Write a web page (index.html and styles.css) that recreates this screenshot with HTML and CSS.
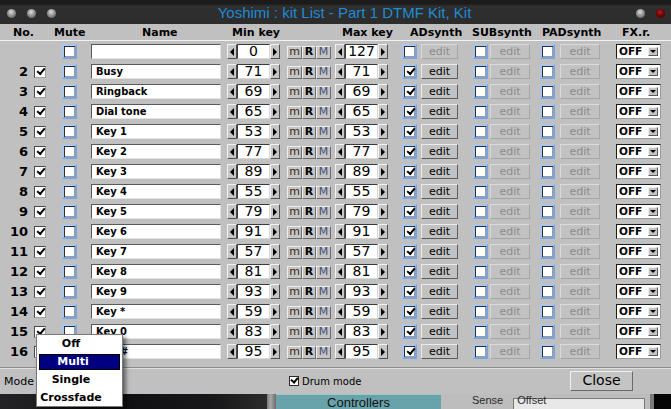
FILE: index.html
```html
<!DOCTYPE html>
<html>
<head>
<meta charset="utf-8">
<link rel="stylesheet" href="styles.css">
</head>
<body>
<div class="titlebar">
  <span class="ball"></span><span class="ball"></span><span class="ball"></span>
  <span class="title">Yoshimi : kit List - Part 1 DTMF Kit, Kit</span>
  <span class="ball"></span><span class="ball red"></span>
</div>
<div class="window">
  <div class="header">
    <span class="h h-no">No.</span>
    <span class="h h-mute">Mute</span>
    <span class="h h-name">Name</span>
    <span class="h h-min">Min key</span>
    <span class="h h-max">Max key</span>
    <span class="h h-ad">ADsynth</span>
    <span class="h h-sub">SUBsynth</span>
    <span class="h h-pad">PADsynth</span>
    <span class="h">FX.r.</span>
  </div>
  <div class="rows">
    <div class="row">
      <span class="num"></span><span class="en none"></span><span class="chk mute"></span>
      <span class="name"></span>
      <span class="spin"><span class="arr l"></span><span class="val">0</span><span class="arr r"></span></span>
      <span class="mrm"><span class="b bm">m</span><span class="b br">R</span><span class="b bM">M</span></span>
      <span class="spin max"><span class="arr l"></span><span class="val">127</span><span class="arr r"></span></span>
      <span class="chk ad"></span><span class="edit e-ad off">edit</span>
      <span class="chk sub"></span><span class="edit e-sub off">edit</span>
      <span class="chk pad"></span><span class="edit e-pad off">edit</span>
      <span class="fx">OFF<span class="dd"></span></span>
    </div>
    <div class="row">
      <span class="num">2</span><span class="en on"></span><span class="chk mute"></span>
      <span class="name">Busy</span>
      <span class="spin"><span class="arr l"></span><span class="val">71</span><span class="arr r"></span></span>
      <span class="mrm"><span class="b bm">m</span><span class="b br">R</span><span class="b bM">M</span></span>
      <span class="spin max"><span class="arr l"></span><span class="val">71</span><span class="arr r"></span></span>
      <span class="chk ad on"></span><span class="edit e-ad">edit</span>
      <span class="chk sub"></span><span class="edit e-sub off">edit</span>
      <span class="chk pad"></span><span class="edit e-pad off">edit</span>
      <span class="fx">OFF<span class="dd"></span></span>
    </div>
    <div class="row">
      <span class="num">3</span><span class="en on"></span><span class="chk mute"></span>
      <span class="name">Ringback</span>
      <span class="spin"><span class="arr l"></span><span class="val">69</span><span class="arr r"></span></span>
      <span class="mrm"><span class="b bm">m</span><span class="b br">R</span><span class="b bM">M</span></span>
      <span class="spin max"><span class="arr l"></span><span class="val">69</span><span class="arr r"></span></span>
      <span class="chk ad on"></span><span class="edit e-ad">edit</span>
      <span class="chk sub"></span><span class="edit e-sub off">edit</span>
      <span class="chk pad"></span><span class="edit e-pad off">edit</span>
      <span class="fx">OFF<span class="dd"></span></span>
    </div>
    <div class="row">
      <span class="num">4</span><span class="en on"></span><span class="chk mute"></span>
      <span class="name">Dial tone</span>
      <span class="spin"><span class="arr l"></span><span class="val">65</span><span class="arr r"></span></span>
      <span class="mrm"><span class="b bm">m</span><span class="b br">R</span><span class="b bM">M</span></span>
      <span class="spin max"><span class="arr l"></span><span class="val">65</span><span class="arr r"></span></span>
      <span class="chk ad on"></span><span class="edit e-ad">edit</span>
      <span class="chk sub"></span><span class="edit e-sub off">edit</span>
      <span class="chk pad"></span><span class="edit e-pad off">edit</span>
      <span class="fx">OFF<span class="dd"></span></span>
    </div>
    <div class="row">
      <span class="num">5</span><span class="en on"></span><span class="chk mute"></span>
      <span class="name">Key 1</span>
      <span class="spin"><span class="arr l"></span><span class="val">53</span><span class="arr r"></span></span>
      <span class="mrm"><span class="b bm">m</span><span class="b br">R</span><span class="b bM">M</span></span>
      <span class="spin max"><span class="arr l"></span><span class="val">53</span><span class="arr r"></span></span>
      <span class="chk ad on"></span><span class="edit e-ad">edit</span>
      <span class="chk sub"></span><span class="edit e-sub off">edit</span>
      <span class="chk pad"></span><span class="edit e-pad off">edit</span>
      <span class="fx">OFF<span class="dd"></span></span>
    </div>
    <div class="row">
      <span class="num">6</span><span class="en on"></span><span class="chk mute"></span>
      <span class="name">Key 2</span>
      <span class="spin"><span class="arr l"></span><span class="val">77</span><span class="arr r"></span></span>
      <span class="mrm"><span class="b bm">m</span><span class="b br">R</span><span class="b bM">M</span></span>
      <span class="spin max"><span class="arr l"></span><span class="val">77</span><span class="arr r"></span></span>
      <span class="chk ad on"></span><span class="edit e-ad">edit</span>
      <span class="chk sub"></span><span class="edit e-sub off">edit</span>
      <span class="chk pad"></span><span class="edit e-pad off">edit</span>
      <span class="fx">OFF<span class="dd"></span></span>
    </div>
    <div class="row">
      <span class="num">7</span><span class="en on"></span><span class="chk mute"></span>
      <span class="name">Key 3</span>
      <span class="spin"><span class="arr l"></span><span class="val">89</span><span class="arr r"></span></span>
      <span class="mrm"><span class="b bm">m</span><span class="b br">R</span><span class="b bM">M</span></span>
      <span class="spin max"><span class="arr l"></span><span class="val">89</span><span class="arr r"></span></span>
      <span class="chk ad on"></span><span class="edit e-ad">edit</span>
      <span class="chk sub"></span><span class="edit e-sub off">edit</span>
      <span class="chk pad"></span><span class="edit e-pad off">edit</span>
      <span class="fx">OFF<span class="dd"></span></span>
    </div>
    <div class="row">
      <span class="num">8</span><span class="en on"></span><span class="chk mute"></span>
      <span class="name">Key 4</span>
      <span class="spin"><span class="arr l"></span><span class="val">55</span><span class="arr r"></span></span>
      <span class="mrm"><span class="b bm">m</span><span class="b br">R</span><span class="b bM">M</span></span>
      <span class="spin max"><span class="arr l"></span><span class="val">55</span><span class="arr r"></span></span>
      <span class="chk ad on"></span><span class="edit e-ad">edit</span>
      <span class="chk sub"></span><span class="edit e-sub off">edit</span>
      <span class="chk pad"></span><span class="edit e-pad off">edit</span>
      <span class="fx">OFF<span class="dd"></span></span>
    </div>
    <div class="row">
      <span class="num">9</span><span class="en on"></span><span class="chk mute"></span>
      <span class="name">Key 5</span>
      <span class="spin"><span class="arr l"></span><span class="val">79</span><span class="arr r"></span></span>
      <span class="mrm"><span class="b bm">m</span><span class="b br">R</span><span class="b bM">M</span></span>
      <span class="spin max"><span class="arr l"></span><span class="val">79</span><span class="arr r"></span></span>
      <span class="chk ad on"></span><span class="edit e-ad">edit</span>
      <span class="chk sub"></span><span class="edit e-sub off">edit</span>
      <span class="chk pad"></span><span class="edit e-pad off">edit</span>
      <span class="fx">OFF<span class="dd"></span></span>
    </div>
    <div class="row">
      <span class="num">10</span><span class="en on"></span><span class="chk mute"></span>
      <span class="name">Key 6</span>
      <span class="spin"><span class="arr l"></span><span class="val">91</span><span class="arr r"></span></span>
      <span class="mrm"><span class="b bm">m</span><span class="b br">R</span><span class="b bM">M</span></span>
      <span class="spin max"><span class="arr l"></span><span class="val">91</span><span class="arr r"></span></span>
      <span class="chk ad on"></span><span class="edit e-ad">edit</span>
      <span class="chk sub"></span><span class="edit e-sub off">edit</span>
      <span class="chk pad"></span><span class="edit e-pad off">edit</span>
      <span class="fx">OFF<span class="dd"></span></span>
    </div>
    <div class="row">
      <span class="num">11</span><span class="en on"></span><span class="chk mute"></span>
      <span class="name">Key 7</span>
      <span class="spin"><span class="arr l"></span><span class="val">57</span><span class="arr r"></span></span>
      <span class="mrm"><span class="b bm">m</span><span class="b br">R</span><span class="b bM">M</span></span>
      <span class="spin max"><span class="arr l"></span><span class="val">57</span><span class="arr r"></span></span>
      <span class="chk ad on"></span><span class="edit e-ad">edit</span>
      <span class="chk sub"></span><span class="edit e-sub off">edit</span>
      <span class="chk pad"></span><span class="edit e-pad off">edit</span>
      <span class="fx">OFF<span class="dd"></span></span>
    </div>
    <div class="row">
      <span class="num">12</span><span class="en on"></span><span class="chk mute"></span>
      <span class="name">Key 8</span>
      <span class="spin"><span class="arr l"></span><span class="val">81</span><span class="arr r"></span></span>
      <span class="mrm"><span class="b bm">m</span><span class="b br">R</span><span class="b bM">M</span></span>
      <span class="spin max"><span class="arr l"></span><span class="val">81</span><span class="arr r"></span></span>
      <span class="chk ad on"></span><span class="edit e-ad">edit</span>
      <span class="chk sub"></span><span class="edit e-sub off">edit</span>
      <span class="chk pad"></span><span class="edit e-pad off">edit</span>
      <span class="fx">OFF<span class="dd"></span></span>
    </div>
    <div class="row">
      <span class="num">13</span><span class="en on"></span><span class="chk mute"></span>
      <span class="name">Key 9</span>
      <span class="spin"><span class="arr l"></span><span class="val">93</span><span class="arr r"></span></span>
      <span class="mrm"><span class="b bm">m</span><span class="b br">R</span><span class="b bM">M</span></span>
      <span class="spin max"><span class="arr l"></span><span class="val">93</span><span class="arr r"></span></span>
      <span class="chk ad on"></span><span class="edit e-ad">edit</span>
      <span class="chk sub"></span><span class="edit e-sub off">edit</span>
      <span class="chk pad"></span><span class="edit e-pad off">edit</span>
      <span class="fx">OFF<span class="dd"></span></span>
    </div>
    <div class="row">
      <span class="num">14</span><span class="en on"></span><span class="chk mute"></span>
      <span class="name">Key *</span>
      <span class="spin"><span class="arr l"></span><span class="val">59</span><span class="arr r"></span></span>
      <span class="mrm"><span class="b bm">m</span><span class="b br">R</span><span class="b bM">M</span></span>
      <span class="spin max"><span class="arr l"></span><span class="val">59</span><span class="arr r"></span></span>
      <span class="chk ad on"></span><span class="edit e-ad">edit</span>
      <span class="chk sub"></span><span class="edit e-sub off">edit</span>
      <span class="chk pad"></span><span class="edit e-pad off">edit</span>
      <span class="fx">OFF<span class="dd"></span></span>
    </div>
    <div class="row">
      <span class="num">15</span><span class="en on"></span><span class="chk mute"></span>
      <span class="name">Key 0</span>
      <span class="spin"><span class="arr l"></span><span class="val">83</span><span class="arr r"></span></span>
      <span class="mrm"><span class="b bm">m</span><span class="b br">R</span><span class="b bM">M</span></span>
      <span class="spin max"><span class="arr l"></span><span class="val">83</span><span class="arr r"></span></span>
      <span class="chk ad on"></span><span class="edit e-ad">edit</span>
      <span class="chk sub"></span><span class="edit e-sub off">edit</span>
      <span class="chk pad"></span><span class="edit e-pad off">edit</span>
      <span class="fx">OFF<span class="dd"></span></span>
    </div>
    <div class="row">
      <span class="num">16</span><span class="en"></span><span class="chk mute"></span>
      <span class="name">Key #</span>
      <span class="spin"><span class="arr l"></span><span class="val">95</span><span class="arr r"></span></span>
      <span class="mrm"><span class="b bm">m</span><span class="b br">R</span><span class="b bM">M</span></span>
      <span class="spin max"><span class="arr l"></span><span class="val">95</span><span class="arr r"></span></span>
      <span class="chk ad on"></span><span class="edit e-ad">edit</span>
      <span class="chk sub"></span><span class="edit e-sub off">edit</span>
      <span class="chk pad"></span><span class="edit e-pad off">edit</span>
      <span class="fx">OFF<span class="dd"></span></span>
    </div>
  </div>
  <div class="footer">
    <span class="mode">Mode</span>
    <span class="drumbox on"></span><span class="drum">Drum mode</span>
    <span class="close">Close</span>
  </div>
  <div class="menu">
    <div class="mi">Off</div>
    <div class="mi sel">Multi</div>
    <div class="mi">Single</div>
    <div class="mi">Crossfade</div>
  </div>
</div>
<div class="desk">
  <span class="dk-left"></span>
  <span class="dk-bar"></span>
  <span class="dk-btn">Controllers</span>
  <span class="dk-panel"><span class="dk-label">Sense</span><span class="dk-label">Offset</span><span class="dk-box"></span></span>
  <span class="dk-edge"></span>
  <span class="dk-black"></span>
</div>
</body>
</html>
```
FILE: styles.css
```css
* { box-sizing: border-box; }
body {
  margin: 0;
  width: 671px;
  height: 409px;
  overflow: hidden;
  background: #111;
  font-family: "DejaVu Sans", sans-serif;
  color: #000;
}

/* title bar */
.titlebar {
  height: 24px;
  display: flex;
  align-items: center;
  padding: 2px 6px 0 7px;
  background: linear-gradient(#1a1a1a 0, #1c1c1c 4px, #2f2f2f 6px, #2c2c2c 100%);
}
.ball {
  width: 9px;
  height: 9px;
  border-radius: 50%;
  margin-right: 11px;
  background: radial-gradient(circle at 45% 35%, #e0e0e0 0, #9a9a9a 40%, #4e4e4e 100%);
}
.ball:last-child { margin-right: 0; }
.ball.red { background: radial-gradient(circle at 45% 35%, #b02020 0, #700000 50%, #3a0000 100%); }
.title {
  flex: 1;
  text-align: center;
  padding-right: 14px;
  font-family: "Liberation Sans", sans-serif;
  font-size: 15px;
  color: #1f8bd4;
  line-height: 20px;
}

/* window */
.window {
  position: relative;
  height: 370px;
  background: #c0c0c0;
}
.header {
  height: 16px;
  display: flex;
  align-items: center;
  padding-left: 13px;
  font-weight: bold;
  font-size: 11px;
}
.h { display: block; white-space: nowrap; }
.h-no { width: 41px; }
.h-mute { width: 88px; }
.h-name { width: 90px; }
.h-min { width: 110px; }
.h-max { width: 68px; }
.h-ad { width: 62px; }
.h-sub { width: 70px; }
.h-pad { width: 80px; }

.rows { border-top: 1px solid #f2f2f2; }
.row {
  height: 20px;
  display: flex;
  align-items: flex-start;
  padding-top: 3px;
}
.row > span { flex: none; }
.num {
  width: 29px;
  padding-right: 1px;
  text-align: right;
  font-weight: bold;
  font-size: 13px;
  line-height: 15px;
}
.en {
  position: relative;
  margin-left: 5px;
  margin-top: 2px;
  width: 12px;
  height: 12px;
  background: #fff;
  border: 1px solid;
  border-color: #4a4a4a #a0a0a0 #a0a0a0 #4a4a4a;
}
.en.none { visibility: hidden; }
.en.on::after, .chk.on::after, .drumbox.on::after {
  content: "";
  position: absolute;
  left: 2px;
  top: 1px;
  width: 6px;
  height: 3px;
  border-left: 2px solid #000;
  border-bottom: 2px solid #000;
  transform: rotate(-50deg);
}
.chk {
  position: relative;
  width: 15px;
  height: 15px;
  background: #fff;
  border: 2px solid;
  border-color: #a8c8f2 #7aa4e0 #7aa4e0 #a8c8f2;
  box-shadow: inset 1px 1px #2e2e2e, inset -1px -1px #9c9c9c;
}
.chk.on::after { left: 3px; top: 2px; width: 6px; height: 3px; }
.mute { margin-left: 16px; }
.name {
  margin-left: 14px;
  width: 130px;
  height: 15px;
  background: #fff;
  border: 1px solid;
  border-color: #5a5a5a #e4e4e4 #e4e4e4 #5a5a5a;
  padding-left: 4px;
  font-family: "DejaVu Sans Condensed", "DejaVu Sans", sans-serif;
  font-weight: bold;
  font-size: 11px;
  line-height: 13px;
  white-space: nowrap;
}
.spin {
  display: flex;
  margin-left: 6px;
  height: 15px;
}
.spin.max { margin-left: 4px; }
.arr {
  width: 10px;
  height: 15px;
  display: flex;
  align-items: center;
  justify-content: center;
  background: #c6c6c6;
  border: 1px solid;
  border-color: #f2f2f2 #505050 #505050 #f2f2f2;
}
.arr::before {
  content: "";
  width: 0;
  height: 0;
  border-top: 4px solid transparent;
  border-bottom: 4px solid transparent;
}
.arr.l::before { border-right: 4px solid #000; }
.arr.r::before { border-left: 4px solid #000; }
.val {
  width: 33px;
  height: 15px;
  background: #fff;
  border: 1px solid;
  border-color: #3a3a3a #d8d8d8 #d8d8d8 #3a3a3a;
  text-align: center;
  font-size: 14px;
  line-height: 12px;
}
.mrm {
  display: flex;
  margin-left: 7px;
  margin-top: 2px;
  height: 13px;
}
.b {
  width: 15px;
  height: 13px;
  background: #c4c4c4;
  border: 1px solid;
  border-color: #eeeeee #6c6c6c #6c6c6c #eeeeee;
  text-align: center;
  font-size: 11px;
  line-height: 10px;
}
.b.br { width: 14px; font-weight: bold; }
.bm { color: #3e2c14; }
.bM { color: #4a4e74; }
.ad { margin-left: 14px; }
.sub { margin-left: 15px; }
.pad { margin-left: 10px; }
.edit {
  height: 15px;
  background: #c2c2c2;
  border: 1px solid;
  border-color: #ececec #5c5c5c #5c5c5c #ececec;
  text-align: center;
  font-size: 11px;
  line-height: 13px;
}
.edit.off {
  color: #8c8c8c;
  border-color: #dadada #a6a6a6 #a6a6a6 #dadada;
}
.e-ad { margin-left: 4px; width: 37px; }
.e-sub { margin-left: 2px; width: 40px; }
.e-pad { margin-left: 5px; width: 40px; }
.fx {
  position: relative;
  display: flex;
  align-items: center;
  justify-content: space-between;
  margin-left: 16px;
  width: 45px;
  height: 15px;
  background: #fff;
  border: 1px solid;
  border-color: #1a1a1a #9a9a9a #9a9a9a #1a1a1a;
  padding: 0 2px 0 2px;
  font-weight: bold;
  font-size: 10.5px;
  line-height: 13px;
}
.dd {
  width: 10px;
  height: 9px;
  display: flex;
  align-items: center;
  justify-content: center;
  background: #c4c4c4;
  border: 1px solid;
  border-color: #eeeeee #5a5a5a #5a5a5a #eeeeee;
}
.dd::before {
  content: "";
  border-left: 3px solid transparent;
  border-right: 3px solid transparent;
  border-top: 3px solid #000;
}

/* footer */
.footer {
  margin-top: 6px;
  height: 27px;
  display: flex;
  align-items: center;
  border-top: 1px solid #8c8c8c;
  box-shadow: inset 0 1px #dedede;
}
.mode {
  width: 289px;
  padding-left: 4px;
  font-size: 11px;
}
.drumbox {
  position: relative;
  width: 10px;
  height: 10px;
  background: #fff;
  border: 1px solid #2a2a2a;
}
.drumbox.on::after { left: 1px; top: 0; width: 5px; height: 3px; }
.drum {
  margin-left: 3px;
  font-size: 10px;
}
.close {
  margin-left: auto;
  margin-right: 38px;
  width: 63px;
  height: 20px;
  background: #c4c4c4;
  border: 1px solid;
  border-color: #f0f0f0 #6a6a6a #6a6a6a #f0f0f0;
  text-align: center;
  font-size: 14px;
  line-height: 17px;
}

/* popup menu */
.menu {
  position: absolute;
  left: 36px;
  top: 310px;
  z-index: 10;
  width: 87px;
  height: 73px;
  background: #fff;
  border: 1px solid #7a7a7a;
  box-shadow: 3px 3px 4px rgba(0, 0, 0, 0.5);
}
.mi {
  height: 18px;
  line-height: 18px;
  text-align: center;
  padding-right: 17px;
  font-weight: bold;
  font-size: 11px;
  white-space: nowrap;
}
.mi.sel {
  height: 16px;
  margin: 1px 2px;
  line-height: 14px;
  padding-right: 13px;
  background: #000080;
  border: 1px solid #000;
  color: #fff;
}

/* desktop behind */
.desk {
  height: 15px;
  display: flex;
  overflow: hidden;
}
.desk > span { flex: none; height: 15px; }
.dk-left {
  width: 267px;
  background: linear-gradient(90deg, #232325 0, #101012 45%, #18181a 80%, #2c2c2c 100%);
}
.dk-bar {
  width: 9px;
  background: linear-gradient(90deg, #7c7c7c, #a8a8a8 40%, #6a6a6a);
}
.dk-btn {
  width: 165px;
  background: #68a3aa;
  border-top: 1px solid #9cc8cc;
  color: #141414;
  text-align: center;
  font-family: "Liberation Sans", sans-serif;
  font-size: 13px;
  line-height: 16px;
}
.dk-panel {
  position: relative;
  width: 209px;
  background: #bdbdbd;
  padding-left: 31px;
  display: flex;
  gap: 14px;
}
.dk-label {
  font-family: "Liberation Sans", sans-serif;
  font-size: 11px;
  color: #2a2a2a;
  line-height: 13px;
  position: relative;
  z-index: 1;
}
.dk-box {
  position: absolute;
  left: 72px;
  top: 4px;
  width: 132px;
  height: 14px;
  background: #e8e8e8;
  border: 1px solid #7a7a7a;
}
.dk-edge {
  width: 4px;
  background: #7a7a7a;
}
.dk-black {
  width: 30px;
  background: #050505;
}
```
